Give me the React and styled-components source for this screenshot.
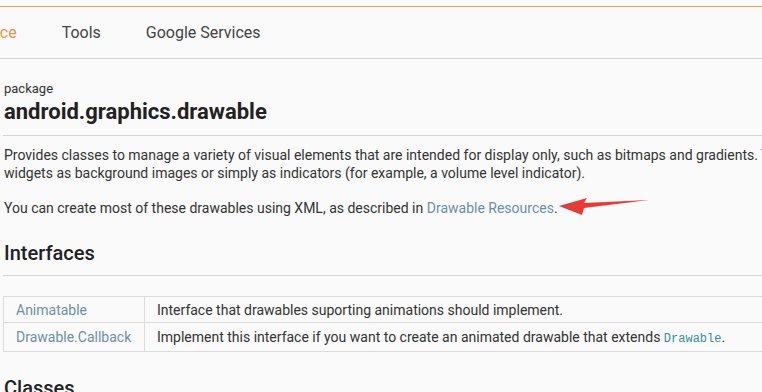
import React from 'react'
import styled, { createGlobalStyle } from 'styled-components'

const GlobalStyle = createGlobalStyle`
  html, body {
    margin: 0;
    padding: 0;
    background: #fafafa;
    overflow: hidden;
  }
  body {
    font-family: Roboto, "Liberation Sans", sans-serif;
    color: #333;
  }
`

const Page = styled.div`
  width: 762px;
  height: 392px;
  overflow: hidden;
  padding-top: 6px;
  box-sizing: border-box;
`

const NavBar = styled.nav`
  border-top: 1px solid #e8a33d;
  border-bottom: 1px solid #d4d4d4;
  height: 51px;
  display: flex;
  align-items: center;
  background: #fafafa;
`

const NavList = styled.div`
  display: flex;
  gap: 45px;
  margin-left: -55px;
  margin-top: -1px;
  font-size: 16px;
`

const NavItem = styled.span`
  color: ${({ active }) => (active ? '#e8944a' : '#444')};
  white-space: nowrap;
`

const Content = styled.main`
  padding: 0 0 0 3px;
  width: 1000px;
`

const Label = styled.div`
  font-size: 13px;
  margin-top: 22px;
  padding-left: 1px;
  line-height: 16px;
`

const Title = styled.h1`
  font-size: 22px;
  font-weight: 700;
  margin: 1px 0 0;
  padding: 0 0 9px 1px;
  line-height: 28px;
  color: #222;
  border-bottom: 1px solid #d4d4d4;
`

const Para = styled.p`
  position: relative;
  font-size: 14px;
  line-height: 18px;
  margin: ${({ first }) => (first ? '10px' : '17px')} 0 0;
  padding-left: 1px;
  white-space: nowrap;
`

const Link = styled.a`
  color: #6d8fa6;
  text-decoration: none;
`

const Arrow = styled.svg`
  position: absolute;
  left: 553px;
  top: -8px;
`

const Heading = styled.h2`
  font-size: 20px;
  font-weight: 500;
  margin: 24px 0 0;
  padding: 0 0 10px 1px;
  line-height: 24px;
  color: #222;
  border-bottom: 1px solid #d4d4d4;
`

const Table = styled.table`
  border-collapse: collapse;
  margin-top: 20px;
  font-size: 14px;
  width: 1000px;
`

const Row = styled.tr`
  height: ${({ h }) => h}px;
`

const NameCell = styled.td`
  border: 1px solid #dcdcdc;
  width: 116px;
  padding: 0 12px;
  color: #6d8fa6;
  white-space: nowrap;
`

const DescCell = styled.td`
  border: 1px solid #dcdcdc;
  padding: 0 12px;
  white-space: nowrap;
`

const Code = styled.code`
  font-family: "Liberation Mono", monospace;
  font-size: 12px;
  color: #3b8aa0;
`

const NextHeading = styled(Heading)`
  margin-top: 24px;
  border: none;
`

const interfaces = [
  { name: 'Animatable', desc: 'Interface that drawables suporting animations should implement.', h: 26 },
  { name: 'Drawable.Callback', desc: 'Implement this interface if you want to create an animated drawable that extends ', code: 'Drawable', h: 29 },
]

const App = () => (
  <Page>
    <GlobalStyle />
    <NavBar>
      <NavList>
        <NavItem active>Reference</NavItem>
        <NavItem>Tools</NavItem>
        <NavItem>Google Services</NavItem>
      </NavList>
    </NavBar>
    <Content>
      <Label>package</Label>
      <Title>android.graphics.drawable</Title>
      <Para first>
        Provides classes to manage a variety of visual elements that are intended for display only, such as bitmaps and gradients. These elements are often used by
        <br />
        widgets as background images or simply as indicators (for example, a volume level indicator).
      </Para>
      <Para>
        You can create most of these drawables using XML, as described in <Link>Drawable Resources</Link>.
        <Arrow width="96" height="26" viewBox="0 0 96 26">
          <path d="M3 15 L31 7 L28 12 L93 9 L28 17 L26 24 Z" fill="#e83a34" />
        </Arrow>
      </Para>
      <Heading>Interfaces</Heading>
      <Table>
        <tbody>
          {interfaces.map(item => (
            <Row key={item.name} h={item.h}>
              <NameCell>{item.name}</NameCell>
              <DescCell>
                {item.desc}
                {item.code && <><Code>{item.code}</Code>.</>}
              </DescCell>
            </Row>
          ))}
        </tbody>
      </Table>
      <NextHeading>Classes</NextHeading>
    </Content>
  </Page>
)

export default App
